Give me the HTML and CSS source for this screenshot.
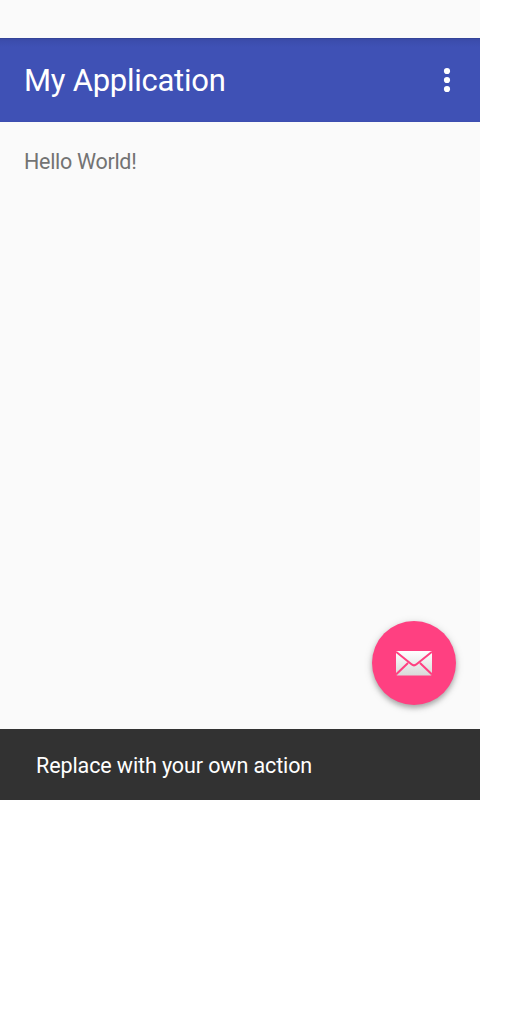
FILE: index.html
```html
<!DOCTYPE html>
<html lang="en">
<head>
<meta charset="utf-8">
<title>My Application</title>
<link rel="stylesheet" href="styles.css">
</head>
<body>
<div class="screen">
  <header class="toolbar">
    <h1 class="title">My Application</h1>
    <button class="overflow" aria-label="More options">
      <svg width="8" height="26" viewBox="0 0 8 26" fill="#fff"><circle cx="4" cy="4" r="3.1"/><circle cx="4" cy="13" r="3.1"/><circle cx="4" cy="22" r="3.1"/></svg>
    </button>
  </header>
  <main class="content"><p class="hello">Hello World!</p></main>
  <button class="fab" aria-label="Email">
    <svg width="36" height="25" viewBox="0 0 36 25">
      <defs><linearGradient id="paper" x1="0" y1="0" x2="0" y2="1"><stop offset="0" stop-color="#fff"/><stop offset="1" stop-color="#d9d9d9"/></linearGradient></defs>
      <path d="M0 0H36V23.5L35 24.5H1L0 23.5Z" fill="url(#paper)"/>
      <path d="M0 .8L15.5 13.3Q18 15.5 20.5 13.3L36 .8M0 23.5L12 12M36 23.5L24 12" fill="none" stroke="#ff4081" stroke-width="2"/>
    </svg>
  </button>
  <div class="snackbar"><span class="message">Replace with your own action</span></div>
</div>
</body>
</html>
```
FILE: styles.css
```css
body { margin: 0; background: #fff; font-family: Roboto, "Noto Sans", sans-serif; }
.screen { position: relative; display: flex; flex-direction: column; box-sizing: border-box; width: 480px; height: 800px; padding-top: 38px; background: #fafafa; }
.toolbar { display: flex; align-items: center; justify-content: space-between; box-sizing: border-box; height: 84px; padding: 0 29px 0 24px; background: linear-gradient(#2f3d8c 0, #3949a5 1px, #3c4dad 3px, #3f51b5 9px, #3f51b5 82px, #3c4dae 84px); }
.title { margin: 0; padding-top: 1px; color: #fff; font-size: 31px; font-weight: 400; line-height: 36px; letter-spacing: -0.25px; }
.overflow { display: flex; padding: 0; border: 0; background: none; }
.content { flex: 1; padding: 27px 24px; }
.hello { margin: 0; color: #737373; font-size: 21.5px; line-height: 25px; letter-spacing: -0.3px; }
.fab { position: absolute; right: 24px; bottom: 95px; display: flex; align-items: center; justify-content: center; width: 84px; height: 84px; padding: 0; border: 0; border-radius: 50%; background: #ff4081; box-shadow: 0 3px 5px rgba(0,0,0,.25), 0 2px 10px rgba(0,0,0,.14); }
.snackbar { display: flex; align-items: center; box-sizing: border-box; height: 71px; padding: 1px 36px 0; background: #323232; }
.message { color: #fff; font-size: 21.5px; line-height: 25px; letter-spacing: -0.1px; }
```
